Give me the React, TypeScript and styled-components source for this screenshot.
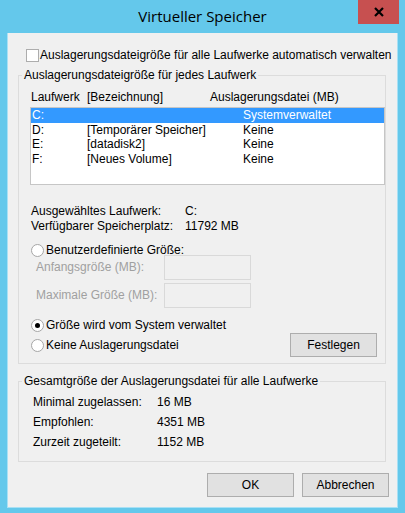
import styled, { createGlobalStyle } from 'styled-components';

const GlobalStyle = createGlobalStyle`
  html, body {
    margin: 0;
    padding: 0;
    background: #ffffff;
  }
  body {
    font-family: "Liberation Sans", Arial, sans-serif;
    font-size: 12px;
    color: #000;
  }
`;

const Window = styled.div`
  width: 405px;
  height: 513px;
  box-sizing: border-box;
  background: #64c8eb;
  padding: 0 7px 5px 7px;
  display: flex;
  flex-direction: column;
`;

const TitleBar = styled.div`
  position: relative;
  height: 33px;
  flex: none;
  display: flex;
  align-items: center;
  justify-content: center;
  margin: 0 -7px;
`;

const Title = styled.div`
  font-family: "Open Sans", "Noto Sans", sans-serif;
  font-size: 15px;
  color: #000;
  margin-top: -1px;
`;

const CloseButton = styled.div`
  position: absolute;
  top: 0;
  right: 6px;
  width: 41px;
  height: 24px;
  background: #c75050;
  display: flex;
  align-items: center;
  justify-content: center;

  svg {
    width: 10px;
    height: 10px;
  }
`;

const Client = styled.div`
  flex: 1;
  background: #f0f0f0;
  border: 1px solid #a9e0f4;
  border-top: none;
  display: flex;
  flex-direction: column;
  line-height: 15px;
`;

const CheckRow = styled.label`
  display: flex;
  align-items: center;
  gap: 1px;
  margin: 16px 0 0 18px;
  height: 13px;
`;

const CheckBox = styled.span`
  width: 11px;
  height: 11px;
  border: 1px solid #adadad;
  background: #fff;
  flex: none;
`;

const Group = styled.fieldset<{ top: number }>`
  margin: ${p => p.top}px 11px 0 10px;
  padding: 0;
  border: 1px solid #dcdcdc;
  min-width: 0;
  display: flex;
  flex-direction: column;
`;

const Legend = styled.legend`
  margin-left: 3px;
  padding: 0 2px;
  line-height: 14px;
`;

const ColumnHeader = styled.div`
  display: grid;
  grid-template-columns: 56px 123px 1fr;
  padding-left: 12px;
  margin-top: 8px;
`;

const DriveList = styled.div`
  margin: 2px 0 0 11px;
  width: 353px;
  height: 76px;
  border: 1px solid #c6c6c6;
  background: #fff;
`;

const DriveRow = styled.div<{ selected?: boolean }>`
  display: grid;
  grid-template-columns: 55px 156px 1fr;
  padding-left: 1px;
  height: 14.5px;
  line-height: 14px;
  background: ${p => (p.selected ? '#3399ff' : 'transparent')};
  color: ${p => (p.selected ? '#fff' : '#000')};
`;

const InfoGrid = styled.div<{ labelWidth: number; rowGap?: number }>`
  display: grid;
  grid-template-columns: ${p => p.labelWidth}px 1fr;
  row-gap: ${p => p.rowGap ?? 0}px;
`;

const DriveInfo = styled(InfoGrid)`
  margin: 19px 0 0 12px;
`;

const RadioRow = styled.label<{ top: number }>`
  display: flex;
  align-items: center;
  gap: 2px;
  margin: ${p => p.top}px 0 0 12px;
  height: 13px;
`;

const Radio = styled.span<{ checked?: boolean }>`
  width: 11px;
  height: 11px;
  border-radius: 50%;
  border: 1px solid #a6a6a6;
  background: #fff;
  flex: none;
  display: flex;
  align-items: center;
  justify-content: center;

  &::after {
    content: '';
    width: 5px;
    height: 5px;
    border-radius: 50%;
    background: ${p => (p.checked ? '#000' : 'transparent')};
  }
`;

const SizeGrid = styled.div`
  display: grid;
  grid-template-columns: 128px 87px;
  row-gap: 3px;
  align-items: center;
  margin: -2px 0 0 17px;
  color: #a0a0a0;
`;

const SizeInput = styled.div`
  height: 23px;
  border: 1px solid #d9d9d9;
  background: #f0f0f0;
`;

const LastRow = styled.div`
  display: flex;
  align-items: center;
  justify-content: space-between;
  margin: 1px 8px 6px 0;
`;

const Button = styled.button`
  width: 87px;
  height: 24px;
  box-sizing: border-box;
  border: 1px solid #adadad;
  background: #e1e1e1;
  font-family: "Liberation Sans", Arial, sans-serif;
  font-size: 12px;
  color: #000;
  padding: 0;
`;

const TotalGrid = styled(InfoGrid)`
  margin: 7px 0 11px 14px;
`;

const ButtonBar = styled.div`
  display: flex;
  justify-content: flex-end;
  gap: 8px;
  margin: auto 8px 10px 0;
`;

const drives = [
  { letter: 'C:', label: '', file: 'Systemverwaltet', selected: true },
  { letter: 'D:', label: '[Temporärer Speicher]', file: 'Keine' },
  { letter: 'E:', label: '[datadisk2]', file: 'Keine' },
  { letter: 'F:', label: '[Neues Volume]', file: 'Keine' },
];

export default function App() {
  return (
    <>
      <GlobalStyle />
      <Window>
        <TitleBar>
          <Title>Virtueller Speicher</Title>
          <CloseButton>
            <svg viewBox="0 0 10 10">
              <path d="M1 1 L9 9 M9 1 L1 9" stroke="#000" strokeWidth="2.2" />
            </svg>
          </CloseButton>
        </TitleBar>
        <Client>
          <CheckRow>
            <CheckBox />
            Auslagerungsdateigröße für alle Laufwerke automatisch verwalten
          </CheckRow>

          <Group top={6}>
            <Legend>Auslagerungsdateigröße für jedes Laufwerk</Legend>
            <ColumnHeader>
              <span>Laufwerk</span>
              <span>[Bezeichnung]</span>
              <span>Auslagerungsdatei (MB)</span>
            </ColumnHeader>
            <DriveList>
              {drives.map(d => (
                <DriveRow key={d.letter} selected={d.selected}>
                  <span>{d.letter}</span>
                  <span>{d.label}</span>
                  <span>{d.file}</span>
                </DriveRow>
              ))}
            </DriveList>

            <DriveInfo labelWidth={154}>
              <span>Ausgewähltes Laufwerk:</span>
              <span>C:</span>
              <span>Verfügbarer Speicherplatz:</span>
              <span>11792 MB</span>
            </DriveInfo>

            <RadioRow top={10}>
              <Radio />
              Benutzerdefinierte Größe:
            </RadioRow>
            <SizeGrid>
              <span>Anfangsgröße (MB):</span>
              <SizeInput />
              <span>Maximale Größe (MB):</span>
              <SizeInput />
            </SizeGrid>
            <RadioRow top={11}>
              <Radio checked />
              Größe wird vom System verwaltet
            </RadioRow>
            <LastRow>
              <RadioRow top={0}>
                <Radio />
                Keine Auslagerungsdatei
              </RadioRow>
              <Button>Festlegen</Button>
            </LastRow>
          </Group>

          <Group top={10}>
            <Legend>Gesamtgröße der Auslagerungsdatei für alle Laufwerke</Legend>
            <TotalGrid labelWidth={124} rowGap={5}>
              <span>Minimal zugelassen:</span>
              <span>16 MB</span>
              <span>Empfohlen:</span>
              <span>4351 MB</span>
              <span>Zurzeit zugeteilt:</span>
              <span>1152 MB</span>
            </TotalGrid>
          </Group>

          <ButtonBar>
            <Button>OK</Button>
            <Button>Abbrechen</Button>
          </ButtonBar>
        </Client>
      </Window>
    </>
  );
}
